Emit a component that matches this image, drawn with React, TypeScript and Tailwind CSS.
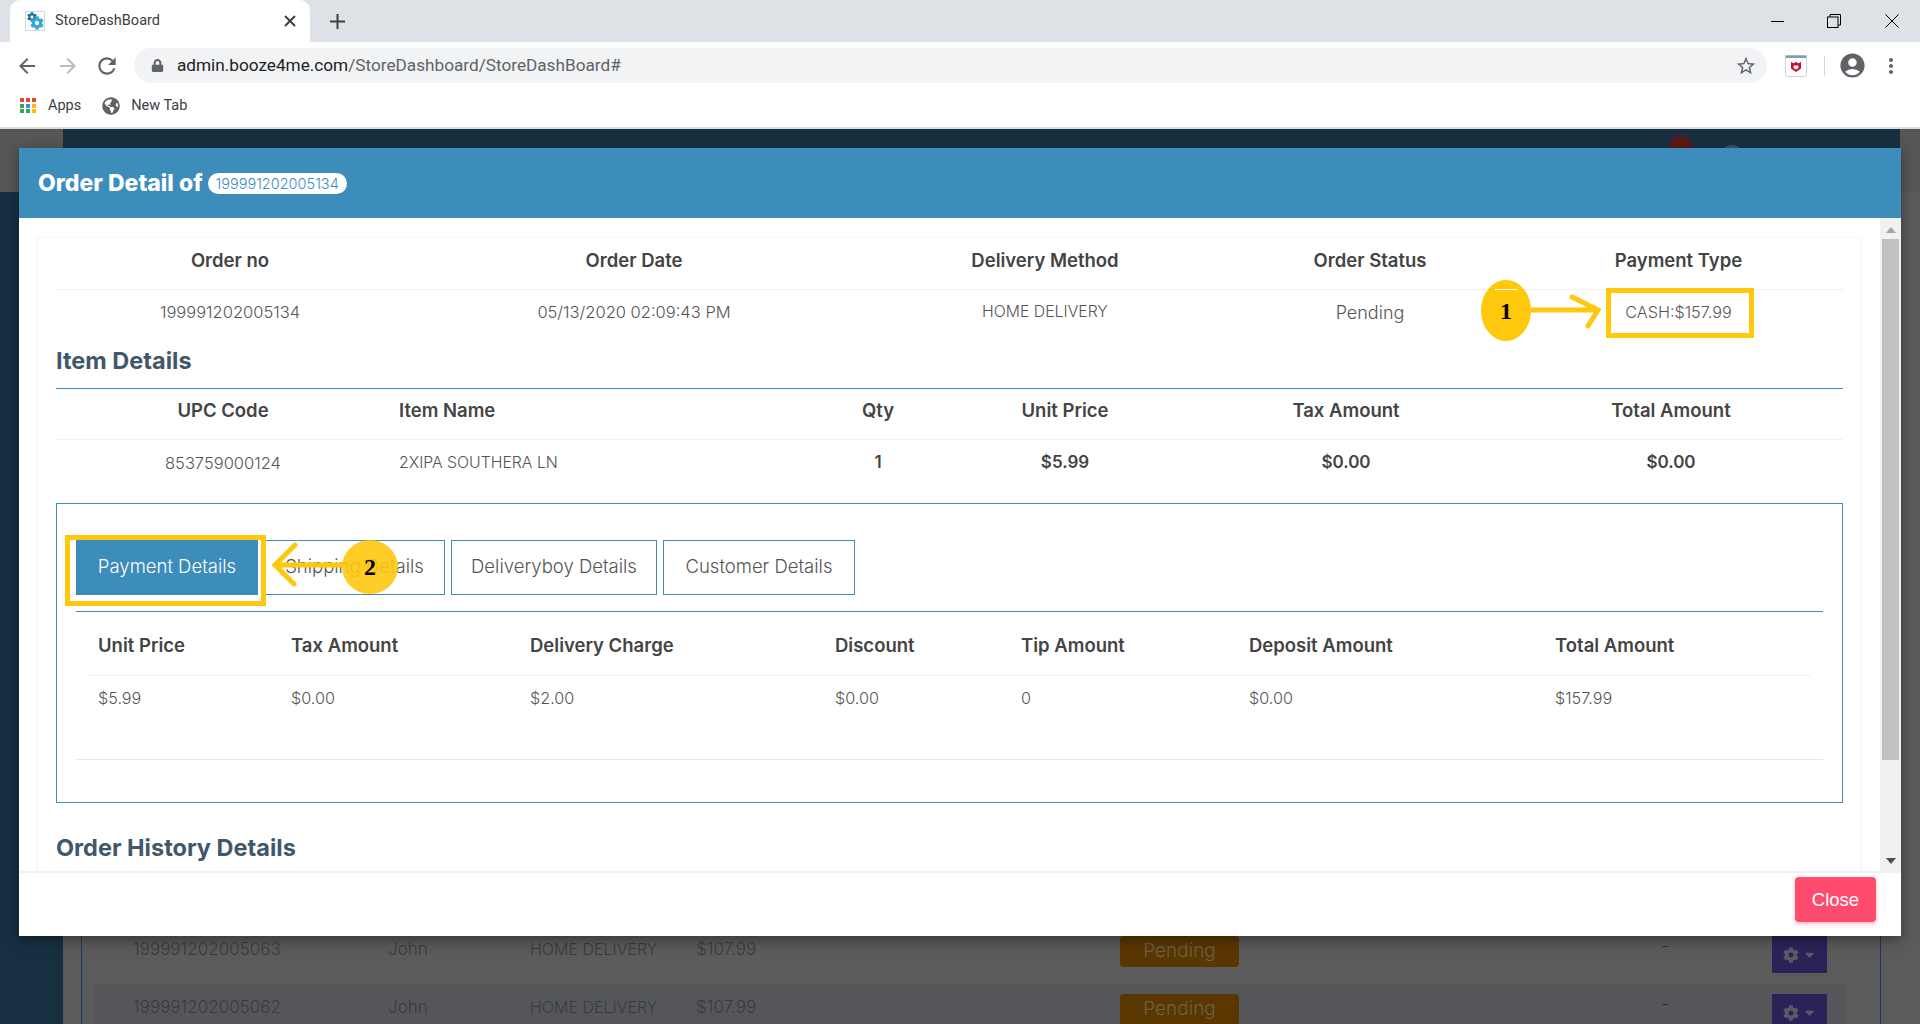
import { FaCaretDown, FaCog, FaGlobeAmericas, FaLock } from "react-icons/fa";
import {
  MdAccountCircle,
  MdArrowBack,
  MdArrowForward,
  MdMoreVert,
  MdOutlineStarBorder,
  MdRefresh,
} from "react-icons/md";

const orderCols = [
  { w: "w-[348px]", head: "Order no", val: "199991202005134", size: "text-[16.500px]" },
  { w: "w-[460px]", head: "Order Date", val: "05/13/2020 02:09:43 PM", size: "text-[16.500px]" },
  { w: "w-[362px]", head: "Delivery Method", val: "HOME DELIVERY", size: "text-[15.800px]" },
  { w: "w-[288px]", head: "Order Status", val: "Pending", size: "text-[18px]" },
  { w: "w-[329px]", head: "Payment Type", val: "CASH:$157.99", size: "text-[16.200px]" },
];

const payCols = [
  { w: "w-[193px]", head: "Unit Price", val: "$5.99" },
  { w: "w-[239px]", head: "Tax Amount", val: "$0.00" },
  { w: "w-[305px]", head: "Delivery Charge", val: "$2.00" },
  { w: "w-[186px]", head: "Discount", val: "$0.00" },
  { w: "w-[228px]", head: "Tip Amount", val: "0" },
  { w: "w-[306px]", head: "Deposit Amount", val: "$0.00" },
  { w: "w-[266px]", head: "Total Amount", val: "$157.99" },
];

const appsColors = [
  "bg-[#ea4335]", "bg-[#ea4335]", "bg-[#ea4335]",
  "bg-[#34a853]", "bg-[#4285f4]", "bg-[#fbbc05]",
  "bg-[#34a853]", "bg-[#34a853]", "bg-[#fbbc05]",
];

function Favicon() {
  return (
    <div className="relative h-[20px] w-[20px] shrink-0 border border-[#d5d9dc] bg-white">
      <FaCog className="absolute left-[1px] top-0 text-[10px] text-[#1f6f95]" />
      <FaCog className="absolute bottom-0 right-0 text-[14px] text-[#35a7df]" />
    </div>
  );
}

function McAfee() {
  return (
    <svg width="22" height="22" viewBox="0 0 22 22">
      <rect x="0.5" y="0.5" width="21" height="21" rx="2" fill="#fff" stroke="#d0d3d6" />
      <rect x="0.5" y="0.5" width="21" height="2.5" fill="#7f9eae" />
      <path d="M6 7l2.6 1.2L11 7l2.400 1.200L16 7v6.500L11 17l-5-3.500z" fill="#c8102e" />
      <path d="M8.600 10.500h4.800v2.400L11 14.400l-2.400-1.500z" fill="#fff" />
    </svg>
  );
}

function ChromeBar() {
  return (
    <div className="w-full shrink-0 bg-white font-['Roboto',sans-serif]">
      <div className="flex h-[42px] items-stretch bg-[#dee1e6] pl-[10px]">
        <div className="flex w-[300px] items-center rounded-t-[10px] bg-white pl-[15px] pr-[14px]">
          <Favicon />
          <span className="ml-[10px] flex-1 text-[14.5px] text-[#3c4043]">StoreDashBoard</span>
          <svg width="12" height="12" viewBox="0 0 12 12" stroke="#3c4043" strokeWidth="2">
            <path d="M1 1l10 10M11 1L1 11" />
          </svg>
        </div>
        <div className="ml-[20px] flex items-center">
          <svg width="15" height="15" viewBox="0 0 15 15" stroke="#3c4043" strokeWidth="2">
            <path d="M7.500 0v15M0 7.500h15" />
          </svg>
        </div>
        <div className="ml-auto flex items-center">
          <div className="h-px w-[13px] bg-black" />
          <svg width="14" height="14" viewBox="0 0 14 14" fill="none" stroke="#000" className="ml-[43px]">
            <rect x="0.5" y="3" width="10.500" height="10.500" />
            <path d="M3 3V0.500h10.500V11H11" />
          </svg>
          <svg width="14" height="14" viewBox="0 0 14 14" stroke="#000" className="ml-[44px] mr-[21px]">
            <path d="M0.500 0.500l13 13M13.500 0.500l-13 13" />
          </svg>
        </div>
      </div>
      <div className="flex h-[46px] items-center pt-[1px]">
        <MdArrowBack className="ml-[15px] text-[24px] text-[#5f6368]" />
        <MdArrowForward className="ml-[17px] text-[24px] text-[#b9bcc0]" />
        <MdRefresh className="ml-[14px] text-[26px] text-[#5f6368]" />
        <div className="ml-[14px] flex h-[35px] w-[1633px] items-center rounded-full bg-[#f1f3f4] pl-[17px] pr-[10px]">
          <FaLock className="text-[13px] text-[#5f6368]" />
          <span className="ml-[13px] flex-1 text-[17.200px] text-[#5f6368]">
            <span className="text-[#202124]">admin.booze4me.com</span>/StoreDashboard/StoreDashBoard#
          </span>
          <MdOutlineStarBorder className="text-[22px] text-[#5f6368]" />
        </div>
        <div className="ml-[18px]">
          <McAfee />
        </div>
        <div className="ml-[17px] h-[20px] w-px bg-[#d5d7da]" />
        <MdAccountCircle className="ml-[13px] text-[29px] text-[#5f6368]" />
        <MdMoreVert className="ml-[12px] text-[24px] text-[#5f6368]" />
      </div>
      <div className="flex h-[41px] items-center border-b-2 border-[#dadce0] pb-[4px] pl-[20px] text-[14.500px] text-[#3c4043]">
        <div className="grid w-[16px] grid-cols-3 gap-[1.500px]">
          {appsColors.map((c, i) => (
            <span key={i} className={"h-[4px] w-[4px] " + c} />
          ))}
        </div>
        <span className="ml-[12px]">Apps</span>
        <FaGlobeAmericas className="ml-[21px] text-[18px] text-[#5f6368]" />
        <span className="ml-[11px]">New Tab</span>
      </div>
    </div>
  );
}

function BackRow({ shaded, id }: { shaded?: boolean; id: string }) {
  return (
    <div className={"flex h-[58px] shrink-0 pl-[38px] text-[#383b3e] " + (shaded ? "bg-[#55565a]" : "")}>
      <span className="w-[255px] pt-[11px]">{id}</span>
      <span className="w-[142px] pt-[11px]">John</span>
      <span className="w-[166px] whitespace-nowrap pt-[11px] text-[16px]">HOME DELIVERY</span>
      <span className="w-[424px] pt-[11px]">$107.99</span>
      <div className="w-[541px] pt-[10px]">
        <div className="flex h-[31px] w-[119px] items-center justify-center rounded-[4px] bg-[#5a3700] text-[19px] text-[#6e5f48]">
          Pending
        </div>
      </div>
      <span className="w-[111px] pt-[8px] text-[#2b2f33]">-</span>
      <div className="pt-[10px]">
        <div className="flex h-[37px] w-[55px] items-center justify-center gap-[3px] bg-[#2a2358] text-[#5c5866]">
          <FaCog className="text-[16px]" />
          <FaCaretDown className="text-[15px]" />
        </div>
      </div>
    </div>
  );
}

function Background() {
  return (
    <div className="flex flex-1 overflow-hidden font-['Inter',sans-serif] text-[17px] font-light">
      <div className="flex w-[63px] shrink-0 flex-col bg-[#163042]">
        <div className="h-[63px] bg-[#565656]" />
      </div>
      <div className="flex flex-1 flex-col bg-[#5b5b5b]">
        <div className="flex h-[63px] shrink-0">
          <div className="flex w-[1837px] items-start justify-end bg-[#163042] pr-[155px] pt-[5px]">
            <div className="h-[27px] w-[27px] rounded-full border-[3px] border-[#3a2233] bg-[#5a1a14]" />
            <div className="ml-[25px] mt-[11px] h-[26px] w-[26px] rounded-full bg-[#3f5666]" />
          </div>
          <div className="flex-1 bg-[#565656]" />
        </div>
        <div className="ml-[18px] mr-[39px] flex flex-1 flex-col border-x border-[#1c3a5c] pl-[13px] pr-[34px] pt-[734px]">
          <BackRow id="199991202005063" />
          <BackRow shaded id="199991202005062" />
        </div>
      </div>
    </div>
  );
}

function SectionTitle({ children }: { children: string }) {
  return <h3 className="text-[23.500px] font-bold leading-none text-[#41586a]">{children}</h3>;
}

function TabButton({ label, w }: { label: string; w: string }) {
  return (
    <button className={"flex h-[55px] items-center justify-center border border-[#3c8cbc] bg-white text-[18.500px] font-light text-[#555] " + w}>
      {label}
    </button>
  );
}

function Modal() {
  const head = "font-semibold text-[18.500px] text-[#444]";
  const val = "font-light text-[16.200px] text-[#555]";
  const strong = "text-center text-[17px] font-semibold text-[#444]";
  return (
    <div className="absolute left-[19px] top-[148px] flex h-[788px] w-[1882px] flex-col bg-white font-['Inter',sans-serif] shadow-[0_4px_12px_rgba(0,0,0,0.4)]">
      <div className="flex h-[70px] shrink-0 items-center bg-[#3c8cbc] pl-[19px] pt-[1px]">
        <span className="text-[23px] font-extrabold text-white">Order Detail of</span>
        <span className="ml-[5px] flex h-[21px] items-center rounded-full bg-white px-[8px] text-[14.500px] font-light text-[#3c8cbc]">
          199991202005134
        </span>
      </div>

      <div className="flex h-[655px] shrink-0 border-b-2 border-[#f1f1f1]">
        <div className="flex-1 overflow-hidden pl-[18px] pr-[18px] pt-[19px]">
          <div className="h-[700px] border-x border-t border-x-[#f3f3f3] border-t-[#f8f8f8] px-[18px]">
            <div className={"flex h-[52px] items-center border-b border-[#f0f0f0] pb-[5px] " + head}>
              {orderCols.map((c) => (
                <div key={c.head} className={"text-center " + c.w}>{c.head}</div>
              ))}
            </div>
            <div className="flex h-[46px] items-center pb-[2px] font-light text-[#555]">
              {orderCols.map((c) => (
                <div key={c.head} className={"text-center " + c.w + " " + c.size}>{c.val}</div>
              ))}
            </div>

            <div className="mt-[12px] border-b border-[#3c8cbc] pb-[15px] pt-[1px]">
              <SectionTitle>Item Details</SectionTitle>
            </div>
            <div className={"flex h-[51px] items-center border-b border-[#f0f0f0] pb-[5px] " + head}>
              <div className="w-[334px] text-center">UPC Code</div>
              <div className="w-[429px] pl-[9px]">Item Name</div>
              <div className="w-[118px] text-center">Qty</div>
              <div className="w-[256px] text-center">Unit Price</div>
              <div className="w-[306px] text-center">Tax Amount</div>
              <div className="w-[344px] text-center">Total Amount</div>
            </div>
            <div className={"flex h-[47px] items-center " + val}>
              <div className="w-[334px] text-center text-[16.500px]">853759000124</div>
              <div className="w-[429px] pl-[9px] text-[15.800px]">2XIPA SOUTHERA LN</div>
              <div className={"w-[118px] " + strong}>1</div>
              <div className={"w-[256px] " + strong}>$5.99</div>
              <div className={"w-[306px] " + strong}>$0.00</div>
              <div className={"w-[344px] " + strong}>$0.00</div>
            </div>

            <div className="mt-[16px] h-[300px] border border-[#3c8cbc] px-[19px] pt-[36px]">
              <div className="flex h-[72px] items-start gap-[6px] border-b border-[#3c8cbc]">
                <button className="flex h-[55px] w-[182px] items-center justify-center bg-[#3c8cbc] text-[18.500px] font-light text-white">
                  Payment Details
                </button>
                <TabButton label="Shipping Details" w="w-[181px]" />
                <TabButton label="Deliveryboy Details" w="w-[206px]" />
                <TabButton label="Customer Details" w="w-[192px]" />
              </div>
              <div className="h-[148px] border-b border-[#e8e8e8] px-[12px]">
                <div className={"flex h-[64px] items-center border-b border-[#f0f0f0] pt-[5px] " + head}>
                  {payCols.map((c) => (
                    <div key={c.head} className={"pl-[10px] " + c.w}>{c.head}</div>
                  ))}
                </div>
                <div className={"flex h-[45px] items-center " + val}>
                  {payCols.map((c) => (
                    <div key={c.head} className={"pl-[10px] " + c.w}>{c.val}</div>
                  ))}
                </div>
              </div>
            </div>

            <div className="mt-[33px]">
              <SectionTitle>Order History Details</SectionTitle>
            </div>
          </div>
        </div>
        <div className="flex w-[21px] shrink-0 flex-col items-center bg-[#f1f1f1]">
          <div className="mt-[9px] h-0 w-0 border-x-[5px] border-b-[6px] border-x-transparent border-b-[#a3a3a3]" />
          <div className="mt-[6px] h-[521px] w-[17px] bg-[#c1c1c1]" />
          <div className="mt-[98px] h-0 w-0 border-x-[5px] border-t-[6px] border-x-transparent border-t-[#505050]" />
        </div>
      </div>

      <div className="flex flex-1 items-start justify-end pr-[25px] pt-[4px]">
        <button className="flex h-[45px] w-[81px] items-center justify-center rounded-[4px] bg-[#ff4b6e] font-['Liberation_Sans',sans-serif] text-[18.500px] text-white shadow-[0_2px_4px_rgba(255,75,110,0.4)]">
          Close
        </button>
      </div>
    </div>
  );
}

function Annotations() {
  const badge = "absolute flex items-center justify-center rounded-[50%] font-['Liberation_Serif',serif] text-[24px] font-bold text-black";
  return (
    <>
      <div className="absolute left-[1606px] top-[288px] h-[50px] w-[148px] border-[5px] border-[#ffc80d]" />
      <div className={badge + " left-[1481px] top-[280px] h-[61px] w-[50px] bg-[#ffc80d]"}>
        1
        <span className="absolute left-[14px] top-[9px] h-px w-[22px] bg-white" />
      </div>
      <svg className="absolute left-[1531px] top-[290px]" width="74" height="42" viewBox="0 0 74 42" fill="none" stroke="#ffc80d" strokeWidth="5" strokeLinecap="round">
        <path d="M0 20h65M41 7l26 13-10 16" />
      </svg>

      <div className="absolute left-[65px] top-[535px] h-[71px] w-[201px] border-[5px] border-[#ffc80d]" />
      <svg className="absolute left-[270px] top-[542px]" width="74" height="46" viewBox="0 0 74 46" fill="none" stroke="#ffc80d" strokeWidth="5" strokeLinecap="round">
        <path d="M74 23H5M25 3L5 23l19 19" />
      </svg>
      <div className={badge + " left-[342px] top-[540px] h-[54px] w-[56px] bg-[#ffc80d]/90"}>2</div>
    </>
  );
}

export default function App() {
  return (
    <div className="relative flex h-screen w-full flex-col overflow-hidden">
      <ChromeBar />
      <Background />
      <Modal />
      <Annotations />
    </div>
  );
}
